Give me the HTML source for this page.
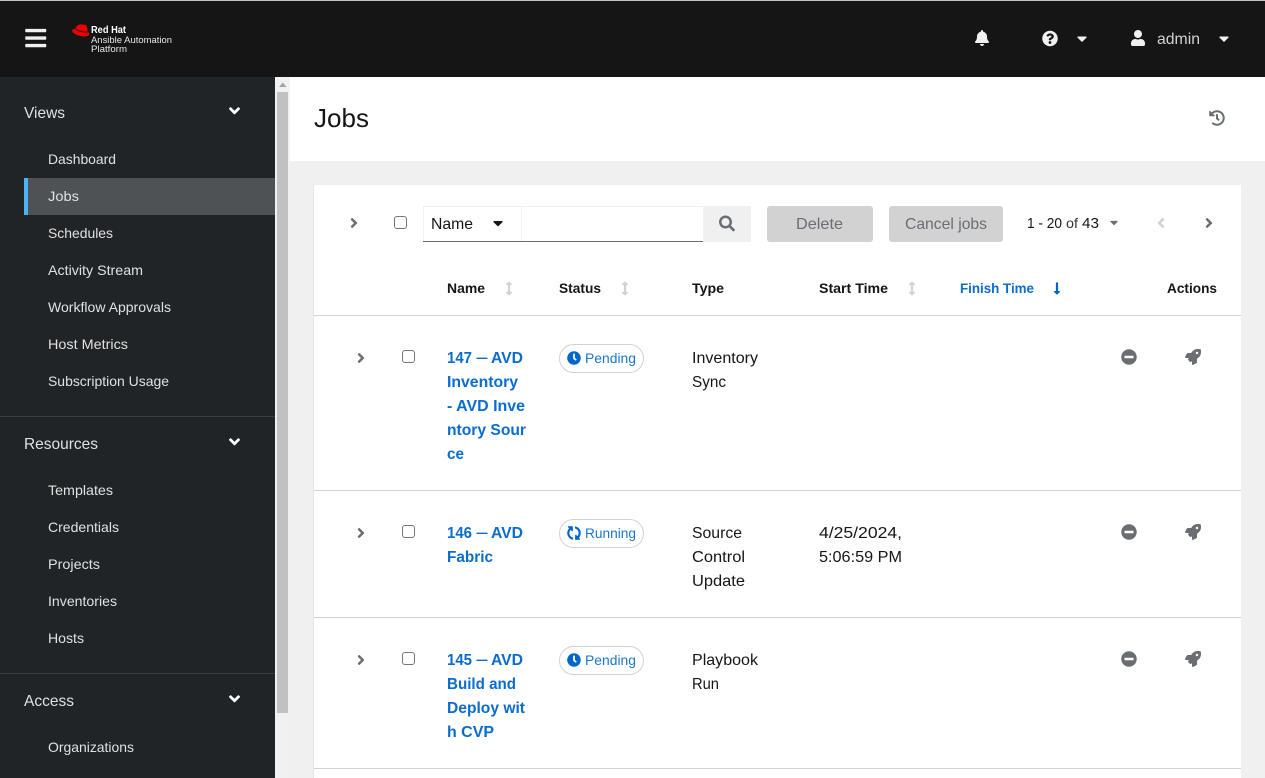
<!DOCTYPE html>
<html lang="en"><head><meta charset="utf-8"><title>Jobs</title>
<style>
html,body{margin:0;padding:0;width:1265px;height:778px;overflow:hidden;background:#f0f0f0}
svg{display:block;font-family:"Liberation Sans",sans-serif}
text{white-space:pre}
.nav{font-size:14px;fill:#e0e0e0}
.grp{font-size:16px;fill:#e0e0e0}
.td{font-size:16px;fill:#151515}
.lk{font-size:16px;fill:#0a6ccf;font-weight:bold}
.th{font-size:14px;fill:#151515;font-weight:bold}
.bd{font-size:14px;fill:#1a76d2}
</style></head><body>
<svg xmlns="http://www.w3.org/2000/svg" width="1265" height="778" viewBox="0 0 1265 778">
<defs>
<symbol id="bars" viewBox="0 0 448 512"><path d="M16 132h416c8.837 0 16-7.163 16-16V76c0-8.837-7.163-16-16-16H16C7.163 60 0 67.163 0 76v40c0 8.837 7.163 16 16 16zm0 160h416c8.837 0 16-7.163 16-16v-40c0-8.837-7.163-16-16-16H16c-8.837 0-16 7.163-16 16v40c0 8.837 7.163 16 16 16zm0 160h416c8.837 0 16-7.163 16-16v-40c0-8.837-7.163-16-16-16H16c-8.837 0-16 7.163-16 16v40c0 8.837 7.163 16 16 16z"/></symbol>
<symbol id="bell" viewBox="0 0 448 512"><path d="M224 512c35.32 0 63.97-28.65 63.97-64H160.03c0 35.35 28.65 64 63.97 64zm215.39-149.71c-19.32-20.76-55.47-51.99-55.47-154.29 0-77.7-54.48-139.9-127.94-155.16V32c0-17.67-14.32-32-31.98-32s-31.98 14.33-31.98 32v20.84C118.56 68.1 64.08 130.3 64.08 208c0 102.3-36.15 133.53-55.47 154.29-6 6.45-8.66 14.16-8.61 21.71.11 16.4 12.98 32 32.1 32h383.8c19.12 0 32-15.6 32.1-32 .05-7.55-2.61-15.27-8.61-21.71z"/></symbol>
<symbol id="q" viewBox="0 0 512 512"><path d="M504 256c0 136.997-111.043 248-248 248S8 392.997 8 256C8 119.083 119.043 8 256 8s248 111.083 248 248zM262.655 90c-54.497 0-89.255 22.957-116.549 63.758-3.536 5.286-2.353 12.415 2.715 16.258l34.699 26.31c5.205 3.947 12.621 3.008 16.665-2.122 17.864-22.658 30.113-35.797 57.303-35.797 20.429 0 45.698 13.148 45.698 32.958 0 14.976-12.363 22.667-32.534 33.976C247.128 238.528 216 254.941 216 296v4c0 6.627 5.373 12 12 12h56c6.627 0 12-5.373 12-12v-1.333c0-28.462 83.186-29.647 83.186-106.667 0-58.002-60.165-102-116.531-102zM256 338c-25.365 0-46 20.635-46 46 0 25.364 20.635 46 46 46s46-20.636 46-46c0-25.365-20.635-46-46-46z"/></symbol>
<symbol id="user" viewBox="0 0 448 512"><path d="M224 256c70.7 0 128-57.3 128-128S294.7 0 224 0 96 57.3 96 128s57.3 128 128 128zm89.6 32h-16.7c-22.2 10.2-46.9 16-72.9 16s-50.6-5.8-72.9-16h-16.7C60.2 288 0 348.2 0 422.4V464c0 26.5 21.5 48 48 48h352c26.5 0 48-21.5 48-48v-41.6c0-74.2-60.2-134.4-134.4-134.4z"/></symbol>
<symbol id="caret" viewBox="0 0 320 512"><path d="M31.3 192h257.3c17.8 0 26.7 21.5 14.1 34.1L174.1 354.8c-7.8 7.8-20.5 7.8-28.3 0L17.2 226.1C4.6 213.5 13.5 192 31.3 192z"/></symbol>
<symbol id="ar" viewBox="0 0 256 512"><path d="M224.3 273l-136 136c-9.4 9.4-24.6 9.4-33.9 0l-22.6-22.6c-9.4-9.4-9.4-24.6 0-33.9l96.4-96.4-96.4-96.4c-9.4-9.4-9.4-24.6 0-33.9L54.3 103c9.4-9.4 24.6-9.4 33.9 0l136 136c9.5 9.4 9.5 24.6.1 34z"/></symbol>
<symbol id="al" viewBox="0 0 256 512"><path d="M31.7 239l136-136c9.4-9.4 24.6-9.4 33.9 0l22.6 22.6c9.4 9.4 9.4 24.6 0 33.9L127.9 256l96.4 96.4c9.4 9.4 9.4 24.6 0 33.9L201.7 409c-9.4 9.4-24.6 9.4-33.9 0l-136-136c-9.5-9.4-9.5-24.6-.1-34z"/></symbol>
<symbol id="ad" viewBox="0 0 320 512"><path d="M143 352.3L7 216.3c-9.4-9.4-9.4-24.6 0-33.9l22.6-22.6c9.4-9.4 24.6-9.4 33.9 0l96.4 96.4 96.4-96.4c9.4-9.4 24.6-9.4 33.9 0l22.6 22.6c9.4 9.4 9.4 24.6 0 33.9l-136 136c-9.2 9.4-24.4 9.4-33.8 0z"/></symbol>
<symbol id="search" viewBox="0 0 512 512"><path d="M505 442.7L405.3 343c-4.5-4.5-10.6-7-17-7H372c27.6-35.3 44-79.7 44-128C416 93.1 322.9 0 208 0S0 93.1 0 208s93.1 208 208 208c48.3 0 92.7-16.4 128-44v16.3c0 6.4 2.5 12.5 7 17l99.7 99.7c9.4 9.4 24.6 9.4 33.9 0l28.3-28.3c9.4-9.4 9.4-24.6.1-34zM208 336c-70.7 0-128-57.2-128-128 0-70.7 57.2-128 128-128 70.7 0 128 57.2 128 128 0 70.7-57.2 128-128 128z"/></symbol>
<symbol id="hist" viewBox="0 0 512 512"><path d="M504 255.531c.253 136.64-111.18 248.372-247.82 248.468-59.015.042-113.223-20.53-155.822-54.911-11.077-8.94-11.905-25.541-1.839-35.607l11.267-11.267c8.609-8.609 22.353-9.551 31.891-1.984C173.062 425.135 212.781 440 256 440c101.705 0 184-82.311 184-184 0-101.705-82.311-184-184-184-48.814 0-93.149 18.969-126.068 49.932l50.754 50.754c10.08 10.08 2.941 27.314-11.313 27.314H24c-8.837 0-16-7.163-16-16V38.627c0-14.254 17.234-21.393 27.314-11.314l49.372 49.372C129.209 34.136 189.552 8 256 8c136.81 0 247.747 110.78 248 247.531zm-180.912 78.784l9.823-12.63c8.138-10.463 6.253-25.542-4.21-33.679L288 256.349V152c0-13.255-10.745-24-24-24h-16c-13.255 0-24 10.745-24 24v135.651l65.409 50.874c10.463 8.137 25.541 6.253 33.679-4.21z"/></symbol>
<symbol id="clock" viewBox="0 0 512 512"><path d="M256,8C119,8,8,119,8,256S119,504,256,504,504,393,504,256,393,8,256,8Zm92.49,313h0l-20,25a16,16,0,0,1-22.49,2.5h0l-67-49.72a40,40,0,0,1-15-31.23V112a16,16,0,0,1,16-16h32a16,16,0,0,1,16,16V256l58,42.5A16,16,0,0,1,348.49,321Z"/></symbol>
<symbol id="sync" viewBox="0 0 512 512"><path d="M370.72 133.28C339.458 104.008 298.888 87.962 255.848 88c-77.458.068-144.328 53.178-162.791 126.85-1.344 5.363-6.122 9.15-11.651 9.15H24.103c-7.498 0-13.194-6.807-11.807-14.176C33.933 94.924 134.813 8 256 8c66.448 0 126.791 26.136 171.315 68.685L463.03 40.97C478.149 25.851 504 36.559 504 57.941V192c0 13.255-10.745 24-24 24H345.941c-21.382 0-32.09-25.851-16.971-40.971l41.75-41.749zM32 296h134.059c21.382 0 32.09 25.851 16.971 40.971l-41.75 41.75c31.262 29.273 71.835 45.319 114.876 45.28 77.418-.07 144.315-53.144 162.787-126.849 1.344-5.363 6.122-9.15 11.651-9.15h57.304c7.498 0 13.194 6.807 11.807 14.176C478.067 417.076 377.187 504 256 504c-66.448 0-126.791-26.136-171.315-68.685L48.97 471.03C33.851 486.149 8 475.441 8 454.059V320c0-13.255 10.745-24 24-24z"/></symbol>
<symbol id="minus" viewBox="0 0 512 512"><path d="M256 8C119 8 8 119 8 256s111 248 248 248 248-111 248-248S393 8 256 8zM124 296c-6.6 0-12-5.4-12-12v-56c0-6.6 5.4-12 12-12h264c6.6 0 12 5.4 12 12v56c0 6.6-5.4 12-12 12H124z"/></symbol>
<symbol id="rocket" viewBox="0 0 512 512"><path d="M505.12019,19.09375c-1.18945-5.53125-6.65819-11-12.207-12.1875C460.716,0,435.507,0,410.40747,0,307.17523,0,245.26909,55.20312,199.05238,128H94.83772c-16.34763.01562-35.55658,11.875-42.88664,26.48438L2.51562,253.29688A28.4,28.4,0,0,0,0,264a24.00867,24.00867,0,0,0,24.00582,24H127.81618l-22.47457,22.46875c-11.36521,11.36133-12.99607,32.25781,0,45.25L156.24582,406.625c11.15623,11.1875,32.15619,13.15625,45.27726,0l22.47457-22.46875V488a24.00867,24.00867,0,0,0,24.00581,24,28.55934,28.55934,0,0,0,10.707-2.51562l98.72834-49.39063c14.62888-7.29687,26.50776-26.5,26.50776-42.85937V312.79688c72.59753-46.3125,128.03493-108.40626,128.03493-211.09376C512.07526,76.5,512.07526,51.29688,505.12019,19.09375ZM384.04033,168A40,40,0,1,1,424.05,128,40.02322,40.02322,0,0,1,384.04033,168Z"/></symbol>
<symbol id="down" viewBox="0 0 256 512"><path d="M168 345.941V44c0-6.627-5.373-12-12-12h-56c-6.627 0-12 5.373-12 12v301.941H41.941c-21.382 0-32.09 25.851-16.971 40.971l86.059 86.059c9.373 9.373 24.569 9.373 33.941 0l86.059-86.059c15.119-15.119 4.411-40.971-16.971-40.971H168z"/></symbol>
<symbol id="sort" viewBox="0 0 256 512"><path d="M214.059 377.941H168V134.059h46.059c21.382 0 32.09-25.851 16.971-40.971L144.971 7.029c-9.373-9.373-24.569-9.373-33.941 0L24.971 93.088c-15.119 15.119-4.411 40.971 16.971 40.971H88v243.882H41.941c-21.382 0-32.09 25.851-16.971 40.971l86.059 86.059c9.373 9.373 24.569 9.373 33.941 0l86.059-86.059c15.12-15.119 4.412-40.971-16.97-40.971z"/></symbol>
</defs>

<!-- backgrounds -->
<rect width="1265" height="778" fill="#f0f0f0"/>
<rect x="290" y="77" width="975" height="84" fill="#fff"/>
<rect x="313" y="185" width="1" height="593" fill="#e6e6e6"/>
<rect x="314" y="185" width="927" height="593" fill="#fff"/>

<!-- masthead -->
<rect width="1265" height="77" fill="#151515"/>
<rect width="1265" height="1" fill="#c4c4be"/>
<use href="#bars" x="25" y="26" width="21.5" height="24" fill="#f0f0f0"/>
<path d="M75.500 28.500C76.500 25.500 79 24 81 24.300C82.500 24.500 83.500 25 85 24.600C86.500 24.500 87 27 87.800 31.500C84 32 79 31 75.500 28.500z" fill="#ee0000"/>
<path d="M74.800 29C73 29.200 71.800 30 72.200 31.200C73 33.800 79 36.300 84.500 36.500C87.500 36.500 89.200 35.500 89.200 34C89.200 33.200 88.700 32.500 88.200 32C85 33.500 79 32 74.800 29z" fill="#ee0000"/>
<text x="91" y="33" font-size="10" font-weight="bold" fill="#fff" textLength="35" lengthAdjust="spacingAndGlyphs">Red Hat</text>
<text x="91" y="43" font-size="9.500" fill="#e8e8e8" textLength="81" lengthAdjust="spacingAndGlyphs">Ansible Automation</text>
<text x="91" y="52" font-size="9.500" fill="#e8e8e8" textLength="36" lengthAdjust="spacingAndGlyphs">Platform</text>
<use href="#bell" x="975" y="30" width="14" height="16" fill="#f0f0f0"/>
<use href="#q" x="1042" y="30.500" width="16" height="16" fill="#f0f0f0"/>
<use href="#caret" x="1077" y="30.500" width="10" height="16" fill="#f0f0f0"/>
<use href="#user" x="1131" y="30" width="14" height="16" fill="#f0f0f0"/>
<text x="1157" y="44" font-size="16" fill="#d2d2d2" textLength="43" lengthAdjust="spacingAndGlyphs">admin</text>
<use href="#caret" x="1219" y="30.500" width="10" height="16" fill="#f0f0f0"/>

<!-- sidebar -->
<rect x="0" y="77" width="275" height="701" fill="#212427"/>
<rect x="24" y="178" width="251" height="37" fill="#4f5255"/>
<rect x="24" y="178" width="4" height="37" fill="#4cb3f5"/>
<rect x="0" y="416" width="275" height="1" fill="#3c3f42"/>
<rect x="0" y="673" width="275" height="1" fill="#3c3f42"/>
<text class="grp" x="24" y="118" textLength="41" lengthAdjust="spacingAndGlyphs">Views</text>
<use href="#ad" x="229" y="102" width="11" height="17.600" fill="#fff"/>
<text class="nav" x="48" y="164" textLength="68" lengthAdjust="spacingAndGlyphs">Dashboard</text>
<text class="nav" x="48" y="201" textLength="31" lengthAdjust="spacingAndGlyphs">Jobs</text>
<text class="nav" x="48" y="238" textLength="65" lengthAdjust="spacingAndGlyphs">Schedules</text>
<text class="nav" x="48" y="275" textLength="95" lengthAdjust="spacingAndGlyphs">Activity Stream</text>
<text class="nav" x="48" y="312" textLength="123" lengthAdjust="spacingAndGlyphs">Workflow Approvals</text>
<text class="nav" x="48" y="349" textLength="80" lengthAdjust="spacingAndGlyphs">Host Metrics</text>
<text class="nav" x="48" y="386" textLength="121" lengthAdjust="spacingAndGlyphs">Subscription Usage</text>
<text class="grp" x="24" y="449" textLength="74" lengthAdjust="spacingAndGlyphs">Resources</text>
<use href="#ad" x="229" y="433" width="11" height="17.600" fill="#fff"/>
<text class="nav" x="48" y="495" textLength="65" lengthAdjust="spacingAndGlyphs">Templates</text>
<text class="nav" x="48" y="532" textLength="71" lengthAdjust="spacingAndGlyphs">Credentials</text>
<text class="nav" x="48" y="569" textLength="52" lengthAdjust="spacingAndGlyphs">Projects</text>
<text class="nav" x="48" y="606" textLength="69" lengthAdjust="spacingAndGlyphs">Inventories</text>
<text class="nav" x="48" y="643" textLength="36" lengthAdjust="spacingAndGlyphs">Hosts</text>
<text class="grp" x="24" y="706" textLength="50" lengthAdjust="spacingAndGlyphs">Access</text>
<use href="#ad" x="229" y="690" width="11" height="17.600" fill="#fff"/>
<text class="nav" x="48" y="752" textLength="86" lengthAdjust="spacingAndGlyphs">Organizations</text>

<!-- scrollbar -->
<rect x="275" y="77" width="15" height="701" fill="#f1f1f1"/>
<rect x="277" y="92" width="11" height="621" fill="#c1c1c1"/>
<path d="M279 87h7.500l-3.750-4.500z" fill="#a3a3a3"/>

<!-- title -->
<text x="314" y="127" font-size="26" fill="#151515" textLength="55" lengthAdjust="spacingAndGlyphs">Jobs</text>
<use href="#hist" x="1209" y="110" width="16" height="16" fill="#6a6e73"/>

<!-- toolbar -->
<use href="#ar" x="350" y="215" width="8" height="16" fill="#6a6e73"/>
<rect x="394.500" y="216.500" width="12" height="12" rx="2.500" fill="#fff" stroke="#767676"/>
<rect x="423" y="206" width="280" height="36" fill="#fff"/>
<rect x="423" y="206" width="280" height="1" fill="#f0f0f0"/>
<rect x="423" y="241" width="280" height="1" fill="#6a6e73"/>
<rect x="423" y="206" width="1" height="35" fill="#f0f0f0"/>
<rect x="521" y="206" width="1" height="35" fill="#f0f0f0"/>
<text x="431" y="229" font-size="16" fill="#151515" textLength="42" lengthAdjust="spacingAndGlyphs">Name</text>
<use href="#caret" x="493" y="215" width="10" height="16" fill="#151515"/>
<rect x="703" y="206" width="48" height="36" fill="#f0f0f0"/>
<use href="#search" x="719" y="215.500" width="16" height="16" fill="#6a6e73"/>
<rect x="767" y="206" width="106" height="36" rx="3" fill="#d2d2d2"/>
<text x="796" y="229" font-size="16" fill="#6a6e73" textLength="47" lengthAdjust="spacingAndGlyphs">Delete</text>
<rect x="889" y="206" width="114" height="36" rx="3" fill="#d2d2d2"/>
<text x="905" y="229" font-size="16" fill="#6a6e73" textLength="82" lengthAdjust="spacingAndGlyphs">Cancel jobs</text>
<text x="1027" y="228" font-size="15" fill="#151515" textLength="35" lengthAdjust="spacingAndGlyphs">1 - 20</text>
<text x="1066" y="228" font-size="14" fill="#333" textLength="12" lengthAdjust="spacingAndGlyphs">of</text>
<text x="1082" y="228" font-size="15" fill="#151515" textLength="17" lengthAdjust="spacingAndGlyphs">43</text>
<use href="#caret" x="1110" y="215.500" width="8" height="14" fill="#6a6e73"/>
<use href="#al" x="1157" y="215" width="8" height="16" fill="#d2d2d2"/>
<use href="#ar" x="1205" y="215" width="8" height="16" fill="#6a6e73"/>

<!-- table head -->
<text class="th" x="447" y="293" textLength="38" lengthAdjust="spacingAndGlyphs">Name</text>
<use href="#sort" x="505.500" y="281.500" width="7" height="14" fill="#d2d2d2"/>
<text class="th" x="559" y="293" textLength="42" lengthAdjust="spacingAndGlyphs">Status</text>
<use href="#sort" x="621.500" y="281.500" width="7" height="14" fill="#d2d2d2"/>
<text class="th" x="692" y="293" textLength="32" lengthAdjust="spacingAndGlyphs">Type</text>
<text class="th" x="819" y="293" textLength="69" lengthAdjust="spacingAndGlyphs">Start Time</text>
<use href="#sort" x="908.500" y="281.500" width="7" height="14" fill="#d2d2d2"/>
<text class="th" x="960" y="293" style="fill:#0a6ccf" textLength="74" lengthAdjust="spacingAndGlyphs">Finish Time</text>
<use href="#down" x="1053.500" y="281.500" width="7" height="14" fill="#06c"/>
<text class="th" x="1167" y="293" textLength="50" lengthAdjust="spacingAndGlyphs">Actions</text>
<rect x="314" y="315" width="927" height="1" fill="#d2d2d2"/>

<!-- row 1 -->
<use href="#ar" x="357" y="350" width="8" height="16" fill="#6a6e73"/>
<rect x="402.500" y="350.500" width="12" height="12" rx="2.500" fill="#fff" stroke="#767676"/>
<text class="lk" x="447" y="363" textLength="25" lengthAdjust="spacingAndGlyphs">147</text>
<text class="lk" x="476.500" y="362" style="font-size:14px" textLength="11" lengthAdjust="spacingAndGlyphs">—</text>
<text class="lk" x="491" y="363" textLength="32" lengthAdjust="spacingAndGlyphs">AVD</text>
<text class="lk" x="447" y="387" textLength="71" lengthAdjust="spacingAndGlyphs">Inventory</text>
<text class="lk" x="447" y="411" textLength="78" lengthAdjust="spacingAndGlyphs">- AVD Inve</text>
<text class="lk" x="447" y="435" textLength="79" lengthAdjust="spacingAndGlyphs">ntory Sour</text>
<text class="lk" x="447" y="459" textLength="17" lengthAdjust="spacingAndGlyphs">ce</text>
<rect x="559.500" y="344.500" width="84" height="28" rx="14" fill="#fff" stroke="#d2d2d2"/>
<use href="#clock" x="567" y="351" width="14" height="14" fill="#06c"/>
<text class="bd" x="585" y="363" textLength="51" lengthAdjust="spacingAndGlyphs">Pending</text>
<text class="td" x="692" y="363" textLength="66" lengthAdjust="spacingAndGlyphs">Inventory</text>
<text class="td" x="692" y="387" textLength="34" lengthAdjust="spacingAndGlyphs">Sync</text>
<use href="#minus" x="1121" y="349" width="16" height="16" fill="#6a6e73"/>
<use href="#rocket" x="1185" y="349" width="16" height="16" fill="#6a6e73"/>
<rect x="314" y="490" width="927" height="1" fill="#d2d2d2"/>

<!-- row 2 -->
<use href="#ar" x="357" y="525" width="8" height="16" fill="#6a6e73"/>
<rect x="402.500" y="525.500" width="12" height="12" rx="2.500" fill="#fff" stroke="#767676"/>
<text class="lk" x="447" y="538" textLength="25" lengthAdjust="spacingAndGlyphs">146</text>
<text class="lk" x="476.500" y="537" style="font-size:14px" textLength="11" lengthAdjust="spacingAndGlyphs">—</text>
<text class="lk" x="491" y="538" textLength="32" lengthAdjust="spacingAndGlyphs">AVD</text>
<text class="lk" x="447" y="562" textLength="46" lengthAdjust="spacingAndGlyphs">Fabric</text>
<rect x="559.500" y="519.500" width="84" height="28" rx="14" fill="#fff" stroke="#d2d2d2"/>
<use href="#sync" x="567" y="526" width="14" height="14" fill="#06c" transform="rotate(90 574 533)"/>
<text class="bd" x="585" y="538" textLength="51" lengthAdjust="spacingAndGlyphs">Running</text>
<text class="td" x="692" y="538" textLength="50" lengthAdjust="spacingAndGlyphs">Source</text>
<text class="td" x="692" y="562" textLength="53" lengthAdjust="spacingAndGlyphs">Control</text>
<text class="td" x="692" y="586" textLength="53" lengthAdjust="spacingAndGlyphs">Update</text>
<text class="td" x="819" y="538" textLength="83" lengthAdjust="spacingAndGlyphs">4/25/2024,</text>
<text class="td" x="819" y="562" textLength="83" lengthAdjust="spacingAndGlyphs">5:06:59 PM</text>
<use href="#minus" x="1121" y="524" width="16" height="16" fill="#6a6e73"/>
<use href="#rocket" x="1185" y="524" width="16" height="16" fill="#6a6e73"/>
<rect x="314" y="617" width="927" height="1" fill="#d2d2d2"/>

<!-- row 3 -->
<use href="#ar" x="357" y="652" width="8" height="16" fill="#6a6e73"/>
<rect x="402.500" y="652.500" width="12" height="12" rx="2.500" fill="#fff" stroke="#767676"/>
<text class="lk" x="447" y="665" textLength="25" lengthAdjust="spacingAndGlyphs">145</text>
<text class="lk" x="476.500" y="664" style="font-size:14px" textLength="11" lengthAdjust="spacingAndGlyphs">—</text>
<text class="lk" x="491" y="665" textLength="32" lengthAdjust="spacingAndGlyphs">AVD</text>
<text class="lk" x="447" y="689" textLength="69" lengthAdjust="spacingAndGlyphs">Build and</text>
<text class="lk" x="447" y="713" textLength="78" lengthAdjust="spacingAndGlyphs">Deploy wit</text>
<text class="lk" x="447" y="737" textLength="47" lengthAdjust="spacingAndGlyphs">h CVP</text>
<rect x="559.500" y="646.500" width="84" height="28" rx="14" fill="#fff" stroke="#d2d2d2"/>
<use href="#clock" x="567" y="653" width="14" height="14" fill="#06c"/>
<text class="bd" x="585" y="665" textLength="51" lengthAdjust="spacingAndGlyphs">Pending</text>
<text class="td" x="692" y="665" textLength="66" lengthAdjust="spacingAndGlyphs">Playbook</text>
<text class="td" x="692" y="689" textLength="27" lengthAdjust="spacingAndGlyphs">Run</text>
<use href="#minus" x="1121" y="651" width="16" height="16" fill="#6a6e73"/>
<use href="#rocket" x="1185" y="651" width="16" height="16" fill="#6a6e73"/>
<rect x="314" y="768" width="927" height="1" fill="#d2d2d2"/>
</svg>
</body></html>
